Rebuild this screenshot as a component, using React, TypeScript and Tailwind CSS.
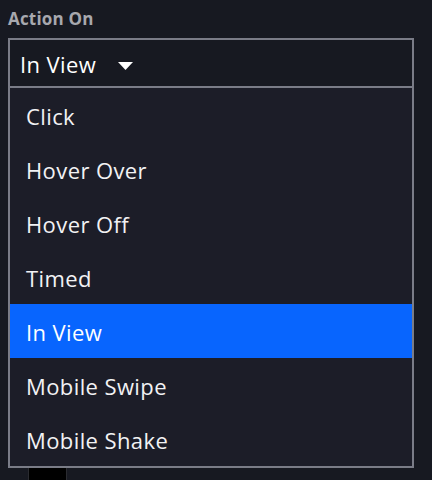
import React from "react";

const items = ["Click", "Hover Over", "Hover Off", "Timed", "In View", "Mobile Swipe", "Mobile Shake"];

export default function App() {
  return (
    <div
      className="relative w-[432px] h-[480px] overflow-hidden bg-[#171921] text-white"
      style={{ fontFamily: '"Open Sans", "Noto Sans", sans-serif' }}
    >
      <div className="absolute left-[28px] top-[467px] w-[39px] h-[20px] bg-black border border-[#2a2b30]" />
      <div className="relative pt-[6px] px-[8px]">
        <div className="text-[17px] font-bold text-[#a7a8ae] leading-[26px] h-[32px] tracking-[0.2px]">Action On</div>
        <div className="w-[406px] h-[50px] border-2 border-[#7a7c87] flex items-center pl-[10px] gap-[22px]">
          <span className="text-[22px] leading-none tracking-[0.4px] pt-[2px]">In View</span>
          <svg width="15" height="8" viewBox="0 0 15 8" className="mt-[6px]">
            <path d="M0 0 H15 L7.5 8 Z" fill="#ffffff" />
          </svg>
        </div>
        <div className="w-[406px] border-2 border-t-0 border-[#7a7c87] bg-[#1c1d28]">
          {items.map((it) => (
            <div
              key={it}
              className={
                "h-[54px] flex items-center pl-[16px] pt-[1px] text-[22px] leading-none tracking-[0.4px] " +
                (it === "In View" ? "bg-[#0865fe] text-white" : "text-[#f2f2f4]")
              }
            >
              {it}
            </div>
          ))}
        </div>
      </div>
    </div>
  );
}
